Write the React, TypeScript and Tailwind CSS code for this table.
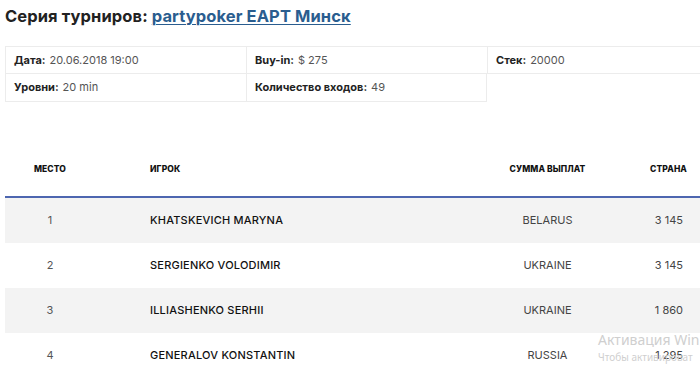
const info = [
  [
    { label: "Дата:", value: "20.06.2018 19:00" },
    { label: "Buy-in:", value: "$ 275" },
    { label: "Стек:", value: "20000" },
  ],
  [
    { label: "Уровни:", value: "20 min" },
    { label: "Количество входов:", value: "49" },
  ],
];

const rows = [
  { place: "1", name: "KHATSKEVICH MARYNA", country: "BELARUS", sum: "3 145" },
  { place: "2", name: "SERGIENKO VOLODIMIR", country: "UKRAINE", sum: "3 145" },
  { place: "3", name: "ILLIASHENKO SERHII", country: "UKRAINE", sum: "1 860" },
  { place: "4", name: "GENERALOV KONSTANTIN", country: "RUSSIA", sum: "1 295" },
];

export default function App() {
  return (
    <div
      className="relative w-[700px] h-[367px] overflow-hidden bg-white text-[#222]"
      style={{ fontFamily: "Inter, 'Open Sans', sans-serif" }}
    >
      <h1 className="pl-[5px] pt-[5px] h-[40px] text-[16.5px] font-bold tracking-[0.1px] leading-[22px]">
        Серия турниров:{" "}
        <a className="text-[#2a5d8f] underline decoration-1 underline-offset-2">
          partypoker EAPT Минск
        </a>
      </h1>

      <div className="ml-[5px] mt-[6px] text-[11px]">
        {info.map((row, i) => (
          <div key={i} className="flex">
            {row.map((c, j) => (
              <div
                key={j}
                className={`w-[241px] h-[28px] flex items-center pl-[8px] border-[#ececec] border-l ${
                  i === 0 ? "border-t border-b" : "border-b"
                } ${j === row.length - 1 ? "border-r" : ""} ${
                  j === 2 ? "flex-1 border-r-0" : ""
                }`}
              >
                <span className="font-bold text-[#222]">{c.label}</span>
                <span className="ml-[4px] text-[#555]">{c.value}</span>
              </div>
            ))}
          </div>
        ))}
      </div>

      <div className="ml-[5px] mt-[55px]">
        <div className="flex items-start pt-[6px] leading-[12px] h-[41px] text-[8.5px] font-extrabold text-[#111] tracking-[0.1px] border-b-2 border-[#4d66b0]">
          <div className="w-[90px] text-center">МЕСТО</div>
          <div className="w-[400px] pl-[55px]">ИГРОК</div>
          <div className="w-[105px] text-center">СУММА ВЫПЛАТ</div>
          <div className="flex-1 text-right pr-[13px]">СТРАНА</div>
        </div>
        {rows.map((r, i) => (
          <div
            key={r.place}
            className={`flex items-center h-[45px] text-[11px] ${
              i % 2 === 0 ? "bg-[#f3f3f3]" : "bg-white"
            }`}
          >
            <div className="w-[90px] text-center text-[#555]">{r.place}</div>
            <div className="w-[400px] pl-[55px] font-medium text-[#111] tracking-[0.2px]">
              {r.name}
            </div>
            <div className="w-[105px] text-center text-[#444]">{r.country}</div>
            <div className="flex-1 text-right pr-[17px] text-[#444]">{r.sum}</div>
          </div>
        ))}
      </div>

      <div
        className="absolute left-[598px] top-[333px] text-[#cfcfcf] leading-none pointer-events-none"
        style={{ fontFamily: "'Noto Sans', sans-serif" }}
      >
        <div className="text-[14px] whitespace-nowrap">Активация Win</div>
        <div className="text-[10px] mt-[5px] whitespace-nowrap">Чтобы активироват</div>
      </div>
    </div>
  );
}
